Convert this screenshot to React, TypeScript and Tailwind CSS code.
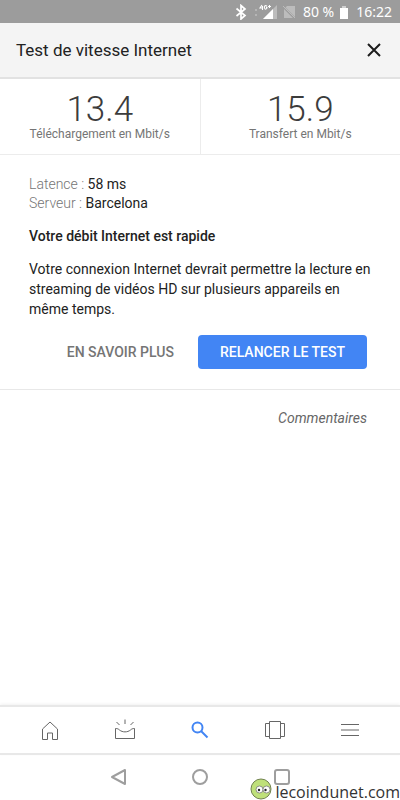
import type { ReactNode } from "react";

function StatusBar() {
  return (
    <div className="flex h-[23px] items-center justify-end bg-[#9c9c9c] pr-2 font-['Noto_Sans',sans-serif] text-sm text-white">
      <svg className="mr-2 h-4 w-3" viewBox="0 0 12 16" fill="none" stroke="currentColor" strokeWidth="1.7" aria-label="Bluetooth">
        <path d="M1.500 4.500 10 11.500 6 15V1.500L10 5l-8.500 7" />
      </svg>
      <svg className="h-5 w-6" viewBox="0 0 24 20" aria-label="4G+">
        <path d="M0 7h2v2H0zM0 12h2v2H0z" fill="#b5b5b5" />
        <path d="M8 17 22 3v14z" fill="#bcbcbc" />
        <path d="M8 17 18 7v10z" fill="#fff" />
        <path d="M4 2h13v5L13 8H4z" fill="#9c9c9c" />
        <path d="M7 3 5 6h3M7.500 4v4M12 4.200c-2-1.500-3 0-2.500 2 .5 1.500 2.500 1 2.500-.7H11M13 4.500h3M14.500 3v3" fill="none" stroke="#fff" strokeWidth="1.1" />
      </svg>
      <svg className="mr-2 ml-1 h-4 w-3" viewBox="0 0 12 16" aria-label="Pas de carte SIM">
        <path d="M4 2h8v11L2.500 3.500zM1 5l9 9H1z" fill="#bcbcbc" />
        <path d="m0 2 12 12" stroke="#bcbcbc" strokeWidth="1" />
      </svg>
      <span>80 %</span>
      <svg className="mr-1.5 ml-1 h-4 w-3" viewBox="0 0 12 16" aria-label="Batterie">
        <path d="M4 2h4v2H4z" fill="#cfcfcf" />
        <path d="M2 4h8v11H2z" fill="#fff" />
      </svg>
      <span>16:22</span>
    </div>
  );
}

function Stat({ value, label }: { value: string; label: string }) {
  return (
    <div className="flex flex-1 flex-col items-center border-[#ececec] pt-[15px] first:border-r">
      <span className="text-[35px] leading-8 font-light text-[#3c3c3c]">{value}</span>
      <span className="text-xs leading-4 text-[#757575]">{label}</span>
    </div>
  );
}

function Tab({ label, children }: { label: string; children: ReactNode }) {
  return (
    <button type="button" aria-label={label} className="flex items-center justify-center text-[#666666]">
      <svg className="size-6" viewBox="0 0 24 24" fill="none" stroke="currentColor" strokeWidth="1">
        {children}
      </svg>
    </button>
  );
}

export default function App() {
  return (
    <div className="flex min-h-screen flex-col bg-white font-[Roboto,sans-serif] text-[#222222]">
      <StatusBar />
      <header className="flex h-14 items-center justify-between border-b-2 border-[#e2e2e2] bg-[#f4f4f4] px-4">
        <h1 className="text-[17px] leading-6">Test de vitesse Internet</h1>
        <button type="button" aria-label="Fermer" className="text-[#1c1c1c]">
          <svg className="size-5" viewBox="0 0 20 20" fill="none" stroke="currentColor" strokeWidth="2">
            <path d="m4 4 12 12M16 4 4 16" />
          </svg>
        </button>
      </header>

      <main className="flex-1">
        <section className="flex h-19 border-b border-[#ececec]">
          <Stat value="13.4" label="Téléchargement en Mbit/s" />
          <Stat value="15.9" label="Transfert en Mbit/s" />
        </section>

        <section className="border-b border-[#e8e8e8] px-[29px] py-5 text-sm leading-[19px]">
          <p>
            <span className="font-light text-[#757575]">Latence : </span>58 ms
          </p>
          <p>
            <span className="font-light text-[#757575]">Serveur : </span>Barcelona
          </p>
          <h2 className="mt-[14px] font-medium">Votre débit Internet est rapide</h2>
          <p className="mt-[13px] leading-5">
            Votre connexion Internet devrait permettre la lecture en streaming de vidéos HD sur plusieurs appareils en même temps.
          </p>
          <div className="mt-4 mr-1 flex items-center justify-end gap-6">
            <button type="button" className="font-medium text-[#757575]">EN SAVOIR PLUS</button>
            <button type="button" className="h-[34px] rounded bg-[#4285f4] px-[22px] font-medium text-white">
              RELANCER LE TEST
            </button>
          </div>
        </section>
        <div className="flex justify-end px-[33px] pt-[18px]">
          <a href="#commentaires" className="text-sm text-[#666666] italic">Commentaires</a>
        </div>
      </main>

      <nav className="grid h-[50px] grid-cols-5 border-y-2 border-[#e8e8e8] px-3 shadow-[0_-1px_3px_rgba(0,0,0,0.06)]">
        <Tab label="Accueil">
          <path d="M4.500 21.500V11L12 4l7.500 7v10.500h-5V15h-5v6.500z" />
        </Tab>
        <Tab label="Actualités">
          <path d="M2.500 10.500v10h19v-10c-2 0-3 .5-4 1.500-3 2.500-8 2.500-11 0-1-1-2-1.500-4-1.500zM12 1.500V6M3.500 4l3 3M20.500 4l-3 3" />
        </Tab>
        <button type="button" aria-label="Recherche" className="flex items-center justify-center text-[#4285f4]">
          <svg className="size-6" viewBox="0 0 24 24" fill="none" stroke="currentColor" strokeWidth="2">
            <circle cx="9.500" cy="9.500" r="5" />
            <path d="m13 13 6.500 6.500" />
          </svg>
        </button>
        <Tab label="Onglets">
          <path d="M6.500 3.500h11v17h-11zM6.500 5.500h-4v13h4M17.500 5.500h4v13h-4" />
        </Tab>
        <Tab label="Menu">
          <path d="M3 6.500h18M3 12h18M3 17.500h18" />
        </Tab>
      </nav>

      <footer className="relative flex h-[45px] items-center justify-center gap-15 pb-px">
        <button type="button" aria-label="Retour" className="text-[#9e9e9e]">
          <svg className="size-[22px]" viewBox="0 0 22 22" fill="none" stroke="currentColor" strokeWidth="2">
            <path d="M18 4v14L5 11z" strokeLinejoin="round" />
          </svg>
        </button>
        <button type="button" aria-label="Accueil du téléphone" className="text-[#9e9e9e]">
          <svg className="size-[22px]" viewBox="0 0 22 22" fill="none" stroke="currentColor" strokeWidth="2">
            <circle cx="11" cy="11" r="7" />
          </svg>
        </button>
        <button type="button" aria-label="Applications récentes" className="text-[#9e9e9e]">
          <svg className="size-[22px]" viewBox="0 0 22 22" fill="none" stroke="currentColor" strokeWidth="2">
            <rect x="4" y="4" width="14" height="14" rx="2" />
          </svg>
        </button>
        <div className="absolute right-0 bottom-0 flex items-end gap-[3px]">
          <svg className="size-[22px]" viewBox="0 0 22 22" aria-hidden="true">
            <circle cx="11" cy="11" r="10" fill="#bfe07a" stroke="#71824f" />
            <circle cx="9.500" cy="11.500" r="3.500" fill="#fff" stroke="#777" strokeWidth=".8" />
            <circle cx="16.500" cy="11.500" r="3.500" fill="#fff" stroke="#777" strokeWidth=".8" />
            <circle cx="9" cy="12" r="1.200" fill="#222" />
            <circle cx="15.500" cy="12" r="1.200" fill="#222" />
          </svg>
          <span className="font-['Open_Sans',sans-serif] text-base leading-4 text-[#333333]">lecoindunet.com</span>
        </div>
      </footer>
    </div>
  );
}
